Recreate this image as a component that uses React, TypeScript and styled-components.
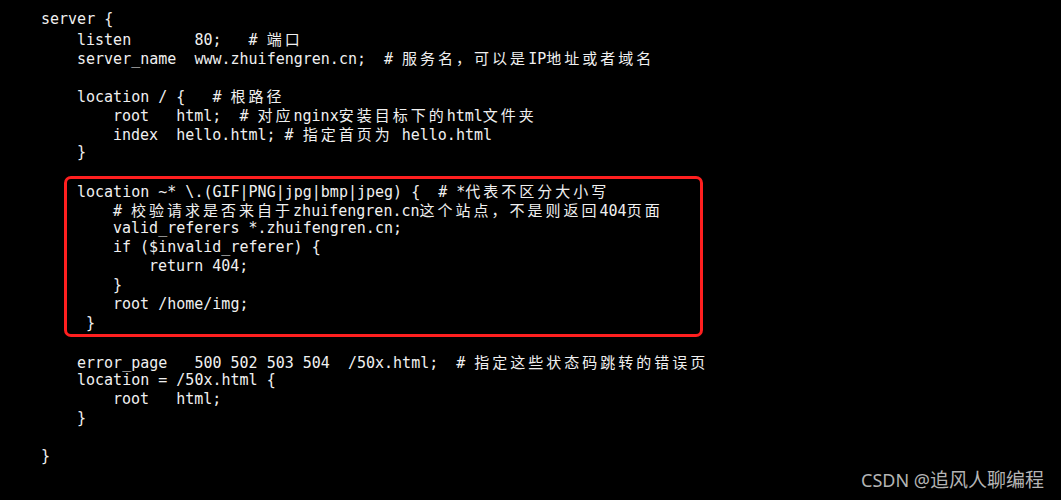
import styled, { createGlobalStyle } from "styled-components";

const GlobalStyle = createGlobalStyle`
  html, body {
    margin: 0;
    padding: 0;
    background: #000;
  }
`;

const Screen = styled.div`
  position: relative;
  width: 1061px;
  height: 500px;
  background: #000;
  overflow: hidden;
`;

const Code = styled.div`
  padding: 10px 0 0 41px;
  font-family: "DejaVu Sans Mono", "Liberation Mono", monospace;
  font-size: 15px;
  line-height: 19px;
  color: #f0f0f0;
`;

const Line = styled.div<{ $indent: number }>`
  height: 19px;
  white-space: pre;
  padding-left: ${(p) => p.$indent * 9}px;
`;

// CJK glyphs take two terminal columns (18px)
const Wide = styled.span`
  font-family: "Noto Sans CJK SC", sans-serif;
  font-size: 15px;
  letter-spacing: 3px;
`;

const Marked = styled.div`
  position: relative;

  &::after {
    content: "";
    position: absolute;
    left: 23px;
    top: -5px;
    bottom: -4px;
    width: 639px;
    box-sizing: border-box;
    border: 3px solid #ff1f1f;
    border-radius: 7px;
  }
`;

const Watermark = styled.div`
  position: absolute;
  right: 17px;
  bottom: 8px;
  font-family: "Noto Sans", "Noto Sans CJK SC", sans-serif;
  font-size: 18px;
  line-height: 24px;
  color: #b4b4b4;
`;

const WatermarkName = styled.span`
  font-family: "Noto Sans CJK SC", sans-serif;
  font-size: 19px;
`;

const cjk = /([\u3000-\u9fff\uff00-\uffef]+)/;

function Text({ value }: { value: string }) {
  const parts = value.split(cjk);
  return (
    <>
      {parts.map((part, i) =>
        i % 2 === 1 ? <Wide key={i}>{part}</Wide> : <span key={i}>{part}</span>
      )}
    </>
  );
}

type Row = [number, string];

const head: Row[] = [
  [0, "server {"],
  [4, "listen       80;   # 端口"],
  [4, "server_name  www.zhuifengren.cn;  # 服务名，可以是IP地址或者域名"],
  [0, ""],
  [4, "location / {   # 根路径"],
  [8, "root   html;  # 对应nginx安装目标下的html文件夹"],
  [8, "index  hello.html; # 指定首页为 hello.html"],
  [4, "}"],
  [0, ""],
];

const marked: Row[] = [
  [4, "location ~* \\.(GIF|PNG|jpg|bmp|jpeg) {  # *代表不区分大小写"],
  [8, "# 校验请求是否来自于zhuifengren.cn这个站点，不是则返回404页面"],
  [8, "valid_referers *.zhuifengren.cn;"],
  [8, "if ($invalid_referer) {"],
  [12, "return 404;"],
  [8, "}"],
  [8, "root /home/img;"],
  [5, "}"],
];

const tail: Row[] = [
  [0, ""],
  [4, "error_page   500 502 503 504  /50x.html;  # 指定这些状态码跳转的错误页"],
  [4, "location = /50x.html {"],
  [8, "root   html;"],
  [4, "}"],
  [0, ""],
  [0, "}"],
];

function Rows({ rows }: { rows: Row[] }) {
  return (
    <>
      {rows.map(([indent, text], i) => (
        <Line key={i} $indent={indent}>
          <Text value={text} />
        </Line>
      ))}
    </>
  );
}

export default function App() {
  return (
    <Screen>
      <GlobalStyle />
      <Code>
        <Rows rows={head} />
        <Marked>
          <Rows rows={marked} />
        </Marked>
        <Rows rows={tail} />
      </Code>
      <Watermark>
        CSDN @<WatermarkName>追风人聊编程</WatermarkName>
      </Watermark>
    </Screen>
  );
}
